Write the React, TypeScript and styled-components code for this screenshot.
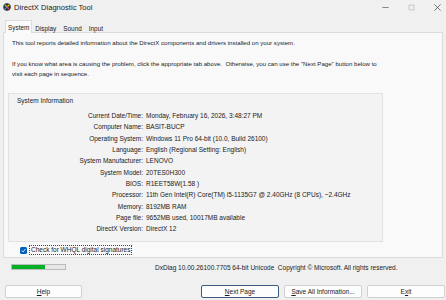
import React from 'react';
import styled, { createGlobalStyle } from 'styled-components';

const GlobalStyle = createGlobalStyle`
  html, body {
    margin: 0;
    padding: 0;
    background: #f0f0f0;
  }
  body {
    font-family: 'Liberation Sans', Arial, sans-serif;
    color: #1a1a1a;
  }
`;

const Window = styled.div`
  width: 446px;
  height: 300px;
  display: flex;
  flex-direction: column;
  background: #f0f0f0;
  overflow: hidden;
`;

const TitleBar = styled.div`
  height: 14px;
  display: flex;
  align-items: center;
  padding-left: 3px;
  font-size: 7.6px;
  color: #1b1b1b;
`;

const Title = styled.span`
  margin-left: 3px;
  flex: 1;
`;

const Controls = styled.div`
  display: flex;
  align-items: center;
  gap: 19px;
  padding-right: 5px;
`;

const TabStrip = styled.div`
  display: flex;
  height: 12px;
  margin-top: 6px;
  padding-left: 5px;
  align-items: flex-end;
`;

const Tab = styled.div<{ $active?: boolean }>`
  height: ${(p) => (p.$active ? '12px' : '10px')};
  display: flex;
  align-items: center;
  padding: 0 2px;
  font-size: 6.4px;
  background: ${(p) => (p.$active ? '#fbfbfb' : 'transparent')};
  border: 1px solid ${(p) => (p.$active ? '#dcdcdc' : 'transparent')};
  border-bottom: none;
  margin-right: ${(p) => (p.$active ? '0' : '1px')};
  position: relative;
  top: 1px;
`;

const Page = styled.div`
  height: 226px;
  margin: 0 3px;
  border: 1px solid #dcdcdc;
  background: #f9f9f9;
  padding: 5px 0 0 3px;
  box-sizing: border-box;
  font-size: 6.5px;
`;

const Intro = styled.p<{ $gap?: number }>`
  margin: ${(p) => p.$gap ?? 0}px 0 0 5px;
  line-height: 10px;
  width: 372px;
  font-size: 6.1px;
`;

const GroupBox = styled.div`
  width: 375px;
  margin-top: 14px;
  margin-left: 1px;
  border: 1px solid #e2e2e2;
  background: #f3f3f3;
  padding: 2px 0 7px 0;
  box-sizing: border-box;
`;

const Legend = styled.div`
  line-height: 10px;
  padding-left: 8px;
  margin-bottom: 4px;
`;

const InfoGrid = styled.div`
  display: grid;
  grid-template-columns: 134px 1fr;
  column-gap: 3px;
  grid-auto-rows: 11.3px;
  align-items: center;
`;

const Label = styled.span`
  text-align: right;
  white-space: nowrap;
`;

const Value = styled.span`
  white-space: nowrap;
`;

const CheckRow = styled.div`
  display: flex;
  align-items: center;
  margin: 3px 0 0 13px;
  height: 10px;
`;

const CheckBox = styled.div`
  width: 7px;
  height: 7px;
  border-radius: 1.5px;
  background: #005fb8;
  display: flex;
  align-items: center;
  justify-content: center;
`;

const CheckLabel = styled.span`
  margin-left: 2px;
  padding: 0 1px;
  border: 1px dotted #444;
  line-height: 8px;
`;

const StatusRow = styled.div`
  display: flex;
  align-items: center;
  height: 10px;
  margin-top: 4px;
  padding-left: 11px;
  font-size: 6.5px;
`;

const Progress = styled.div`
  width: 55px;
  height: 6px;
  border: 1px solid #bcbcbc;
  background: #e6e6e6;
  box-sizing: border-box;
`;

const ProgressFill = styled.div`
  height: 100%;
  background: #06b025;
`;

const Copyright = styled.span`
  margin-left: 89px;
  white-space: nowrap;
`;

const ButtonRow = styled.div`
  display: flex;
  align-items: center;
  margin-top: 13px;
  padding: 0 1px 0 5px;
`;

const Button = styled.div<{ $primary?: boolean }>`
  width: 78px;
  height: 13px;
  box-sizing: border-box;
  display: flex;
  align-items: center;
  justify-content: center;
  font-size: 6.5px;
  background: #fdfdfd;
  border: 1px solid ${(p) => (p.$primary ? '#3a5a80' : '#d0d0d0')};
  box-shadow: ${(p) => (p.$primary ? 'inset 0 0 0 1px #ffffff' : 'none')};
  border-radius: 2px;
  margin-left: ${(p) => (p.$primary ? 'auto' : '5px')};
  &:first-child {
    margin-left: 0;
    width: 77px;
  }
`;

const rows: [string, string][] = [
  ['Current Date/Time:', 'Monday, February 16, 2026, 3:48:27 PM'],
  ['Computer Name:', 'BASIT-BUCP'],
  ['Operating System:', 'Windows 11 Pro 64-bit (10.0, Build 26100)'],
  ['Language:', 'English (Regional Setting: English)'],
  ['System Manufacturer:', 'LENOVO'],
  ['System Model:', '20TES0H300'],
  ['BIOS:', 'R1EET58W(1.58 )'],
  ['Processor:', '11th Gen Intel(R) Core(TM) i5-1135G7 @ 2.40GHz (8 CPUs), ~2.4GHz'],
  ['Memory:', '8192MB RAM'],
  ['Page file:', '9652MB used, 10017MB available'],
  ['DirectX Version:', 'DirectX 12'],
];

const DxIcon = () => (
  <svg width="8" height="8" viewBox="0 0 16 16">
    <circle cx="8" cy="8" r="7.5" fill="#2b2b3a" />
    <path d="M4 4 L8 8" stroke="#7fd13b" strokeWidth="2.6" strokeLinecap="round" />
    <path d="M12 4 L8 8" stroke="#f2c200" strokeWidth="2.6" strokeLinecap="round" />
    <path d="M4 12 L8 8" stroke="#2e8ef0" strokeWidth="2.6" strokeLinecap="round" />
    <path d="M12 12 L8 8" stroke="#e8433a" strokeWidth="2.6" strokeLinecap="round" />
  </svg>
);

const App: React.FC = () => (
  <Window>
    <GlobalStyle />
    <TitleBar>
      <DxIcon />
      <Title>DirectX Diagnostic Tool</Title>
      <Controls>
        <svg width="7" height="7" viewBox="0 0 10 10">
          <path d="M0.5 5 H9.5" stroke="#333" strokeWidth="0.8" />
        </svg>
        <svg width="7" height="7" viewBox="0 0 10 10">
          <rect x="1.5" y="1.5" width="7" height="7" fill="none" stroke="#aaa" strokeWidth="0.8" />
        </svg>
        <svg width="7" height="7" viewBox="0 0 10 10">
          <path d="M0.5 0.5 L9.5 9.5 M9.5 0.5 L0.5 9.5" stroke="#333" strokeWidth="0.9" />
        </svg>
      </Controls>
    </TitleBar>
    <TabStrip>
      <Tab $active>System</Tab>
      <Tab>Display</Tab>
      <Tab>Sound</Tab>
      <Tab>Input</Tab>
    </TabStrip>
    <Page>
      <Intro>
        This tool reports detailed information about the DirectX components and drivers installed on your system.
      </Intro>
      <Intro $gap={11}>
        If you know what area is causing the problem, click the appropriate tab above.&nbsp; Otherwise, you can use
        the "Next Page" button below to visit each page in sequence.
      </Intro>
      <GroupBox>
        <Legend>System Information</Legend>
        <InfoGrid>
          {rows.map(([k, v]) => (
            <React.Fragment key={k}>
              <Label>{k}</Label>
              <Value>{v}</Value>
            </React.Fragment>
          ))}
        </InfoGrid>
      </GroupBox>
      <CheckRow>
        <CheckBox>
          <svg width="5" height="5" viewBox="0 0 10 10">
            <path d="M1.5 5.2 L4 7.8 L8.8 2.2" fill="none" stroke="#fff" strokeWidth="1.8" />
          </svg>
        </CheckBox>
        <CheckLabel>Check for WHQL digital signatures</CheckLabel>
      </CheckRow>
    </Page>
    <StatusRow>
      <Progress>
        <ProgressFill style={{ width: '62%' }} />
      </Progress>
      <Copyright>DxDiag 10.00.26100.7705 64-bit Unicode&nbsp; Copyright © Microsoft. All rights reserved.</Copyright>
    </StatusRow>
    <ButtonRow>
      <Button>
        <u>H</u>elp
      </Button>
      <Button $primary>
        <u>N</u>ext Page
      </Button>
      <Button>
        <u>S</u>ave All Information...
      </Button>
      <Button>
        E<u>x</u>it
      </Button>
    </ButtonRow>
  </Window>
);

export default App;
